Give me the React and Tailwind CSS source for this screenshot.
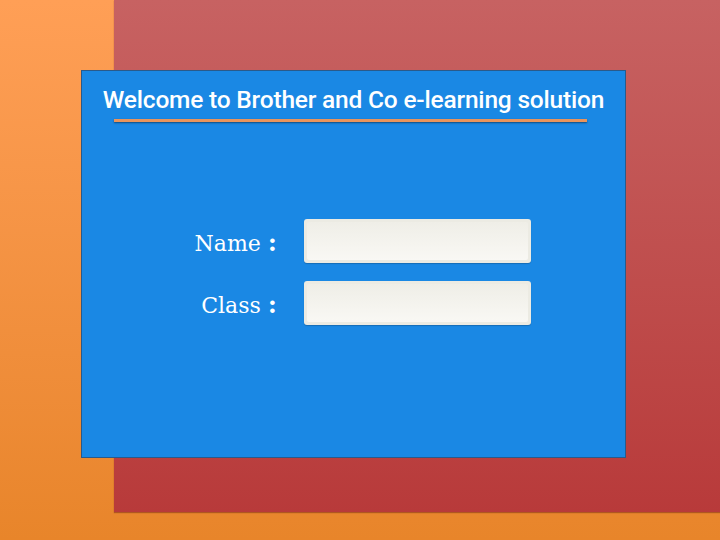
export default function App() {
  return (
    <div className="w-[720px] h-[540px] overflow-hidden bg-gradient-to-b from-[#ff9f56] to-[#e8852a]">
      <div className="ml-[114px] h-[512px] bg-gradient-to-b from-[#c76262] to-[#b83a3a] shadow-[0_1px_1px_rgba(120,40,20,0.5)] pt-[70px]">
        <div className="-ml-[33px] w-[545px] h-[388px] bg-[#1a88e4] border border-[#2a5a8a] flex flex-col items-center">
          <h1 className="mt-[14px] text-white text-[24.5px] leading-[30px] font-medium tracking-[-0.2px] whitespace-nowrap" style={{ fontFamily: "Roboto, 'Noto Sans', sans-serif" }}>
            Welcome to Brother and Co e-learning solution
          </h1>
          <div className="mt-[4px] -ml-[7px] w-[473px] h-[3px] bg-[#e9945c] shadow-[0_1px_2px_rgba(0,0,0,0.45)]" />
          <div className="mt-[97px] flex flex-col gap-[18px] ml-[2px]">
            {["Name", "Class"].map((l) => (
              <div key={l} className="flex items-center">
                <div className="w-[100px] text-right text-white leading-none pr-[1px] pt-[3px]" style={{ fontFamily: "'DejaVu Serif', 'Liberation Serif', serif", fontSize: "22px" }}>
                  {l} <span className="font-bold text-[25px]">:</span>
                </div>
                <div className="ml-[26px] w-[227px] h-[44px] rounded-[3px] bg-[#ecebe3] p-[3px] shadow-[0_1px_1px_rgba(0,0,0,0.2)]">
                  <div className="w-full h-full rounded-[2px] bg-gradient-to-b from-[#efeee7] to-[#f9f8f4]" />
                </div>
              </div>
            ))}
          </div>
        </div>
      </div>
    </div>
  );
}
